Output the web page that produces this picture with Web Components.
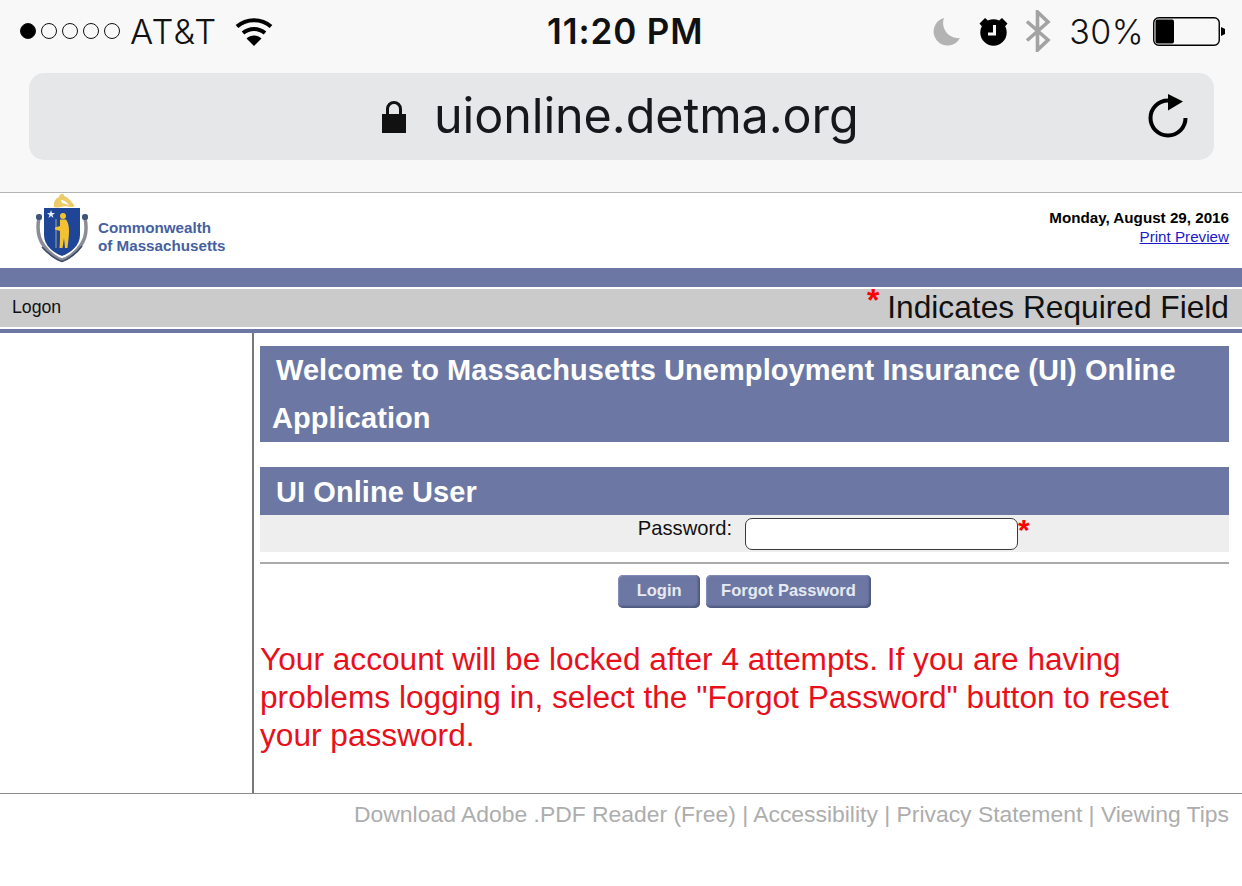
<!DOCTYPE html>
<html lang="en">
<head>
<meta charset="utf-8">
<title>UI Online</title>
<style>
  html, body { margin: 0; padding: 0; background: #fff; }
  body { width: 1242px; height: 886px; overflow: hidden; font-family: "Liberation Sans", Arial, sans-serif; }
</style>
</head>
<body>
<browser-chrome></browser-chrome>
<site-header></site-header>
<nav-strip></nav-strip>
<page-body>
  <section-title>Welcome to Massachusetts Unemployment Insurance (UI) Online Application</section-title>
  <section-title class="user">UI Online User</section-title>
  <password-row></password-row>
  <login-actions></login-actions>
  <lock-warning>Your account will be locked after 4 attempts. If you are having problems logging in, select the "Forgot Password" button to reset your password.</lock-warning>
</page-body>
<site-footer></site-footer>

<script>
class BrowserChrome extends HTMLElement {
  constructor() {
    super()
    this.attachShadow({ mode: 'open' })
    this.shadowRoot.innerHTML = `
      <style>
        :host { display: block; height: 192px; background: #f8f8f8; border-bottom: 1px solid #b4b4b4; font-family: Inter, "Open Sans", sans-serif; color: #111; }
        .status { display: grid; grid-template-columns: 547px auto 1fr; align-items: center; height: 62px; }
        .left, .right { display: flex; align-items: center; }
        .left { padding-left: 20px; }
        .right { justify-content: flex-end; padding-right: 16px; }
        .dots { display: flex; gap: 5px; margin-right: 10px; }
        .dots i { width: 16px; height: 16px; border: 1px solid #111; border-radius: 50%; box-sizing: border-box; }
        .dots i:first-child { background: #000; }
        .carrier, .pct { font-size: 34.5px; font-weight: 300; letter-spacing: 1.2px; }
        .pct { font-size: 34px; letter-spacing: 0.4px; }
        .clock { font-size: 35px; font-weight: 600; letter-spacing: 0.9px; }
        .wifi { margin-left: 18px; }
        .moon { margin-right: 18px; }
        .alarm { margin-right: 17px; }
        .bt { margin-right: 18px; }
        .pct { margin-right: 9px; }
        .url { margin: 11px 28px 0 29px; height: 87px; border-radius: 15px; background: #e6e7e9; display: flex; align-items: center; padding-left: 352px; padding-right: 25px; }
        .host { font-size: 48.5px; font-weight: 400; margin-left: 27px; flex: 1; color: #16181c; padding-bottom: 2px; letter-spacing: -0.1px; }
      </style>
      <div class="status">
        <div class="left">
          <div class="dots"><i></i><i></i><i></i><i></i><i></i></div>
          <span class="carrier">AT&amp;T</span>
          <svg class="wifi" width="38" height="30" viewBox="0 0 38 30">
            <path d="M2 10.5C11.5 2 26.5 2 36 10.5" fill="none" stroke="#000" stroke-width="4"/>
            <path d="M8 17C14.5 11.5 23.5 11.5 30 17" fill="none" stroke="#000" stroke-width="4"/>
            <path d="M11.5 22.5C15.5 18.5 22.5 18.5 26.5 22.5L19 30Z" fill="#000"/>
          </svg>
        </div>
        <div class="clock">11:20 PM</div>
        <div class="right">
          <svg class="moon" width="28" height="29" viewBox="0 0 28 29"><path d="M11 1A14 14 0 1 0 27 21A15 15 0 0 1 11 1Z" fill="#b3b3b3"/></svg>
          <svg class="alarm" width="29" height="29" viewBox="0 0 29 29">
            <circle cx="14.5" cy="15.5" r="13.2" fill="#000"/>
            <path d="M0.5 6.500L6 1L9 3.500L3 9.500ZM28.500 6.500L23 1L20 3.500L26 9.500Z" fill="#000"/>
            <path d="M15.500 8V17H9" fill="none" stroke="#f8f8f8" stroke-width="3"/>
          </svg>
          <svg class="bt" width="26" height="42" viewBox="0 0 26 42"><path d="M2 11.5L23 30L12.5 40V2L23 12L2 30.5" fill="none" stroke="#a3a3a3" stroke-width="3.6"/></svg>
          <span class="pct">30%</span>
          <svg width="73" height="29" viewBox="0 0 73 29">
            <rect x="0.75" y="0.75" width="65.5" height="27.5" rx="5" fill="none" stroke="#000" stroke-width="1.4"/>
            <rect x="2.5" y="2.5" width="18.5" height="24" rx="2" fill="#000"/>
            <path d="M68 10L72 12V17L68 19Z" fill="#000"/>
          </svg>
        </div>
      </div>
      <div class="url">
        <svg width="26" height="36" viewBox="0 0 26 36">
          <path d="M6.5 17V10A6.5 6.5 0 0 1 19.5 10V17" fill="none" stroke="#111" stroke-width="3"/>
          <rect x="1" y="15" width="24" height="19" fill="#111"/>
        </svg>
        <span class="host">uionline.detma.org</span>
        <svg width="42" height="46" viewBox="0 0 42 46">
          <path d="M38.5 24A17.5 17.5 0 1 1 21 6.500" fill="none" stroke="#000" stroke-width="4"/>
          <path d="M21 0L36 7.500L21 16.500Z" fill="#000"/>
        </svg>
      </div>
    `
  }
}

class SiteHeader extends HTMLElement {
  constructor() {
    super()
    this.attachShadow({ mode: 'open' })
    this.shadowRoot.innerHTML = `
      <style>
        :host { display: flex; height: 75px; background: #fff; padding: 0 13px 0 35px; justify-content: space-between; box-sizing: border-box; }
        .brand { display: flex; align-items: flex-start; }
        .words { font-size: 15.2px; line-height: 18px; font-weight: 700; color: #46609f; margin: 26px 0 0 9px; }
        .meta { text-align: right; font-size: 15.2px; line-height: 19px; padding-top: 15px; color: #000; }
        .meta b { display: block; }
        a { color: #1a1ac8; }
      </style>
      <div class="brand">
        <svg width="54" height="70" viewBox="0 0 54 70">
          <path d="M19 14C18 9 21 5 24 4C25 0 29 0 29 3C33 4 36 8 39 12C40 15 35 14 33 13.500C28 12 22 16 19 14Z" fill="#eccb68"/>
          <path d="M26 7C29 7 32 9 34 12L27 10Z" fill="#fff"/>
          <path d="M4 25C2 35 3 45 9 53C14 60 22 66 27 67C32 66 41 60 46 52C51 45 52 35 50 25" fill="none" stroke="#8a8c96" stroke-width="3.500"/>
          <path d="M7 54C13 61 22 67 27 68.500C32 67 41 61 47 53" fill="none" stroke="#3f4c68" stroke-width="1.500"/>
          <rect x="1" y="21" width="6" height="6" rx="2.500" fill="#3f5478"/>
          <rect x="47" y="21" width="6" height="6" rx="2.500" fill="#3f5478"/>
          <path d="M9 15H45V42C45 53 35 60 27 63C19 60 9 53 9 42Z" fill="#1f4596"/>
          <path d="M16 17L17 20L20 20L17.500 22L18.500 25L16 23L13.500 25L14.500 22L12 20L15 20Z" fill="#e8eef8"/>
          <path d="M21 26V55" stroke="#a9a98a" stroke-width="1"/>
          <circle cx="28" cy="23" r="3" fill="#f2c230"/>
          <path d="M25 26.500H31C33 29 34 33 34 38C34 44 33 50 32.500 55H30L29 45L27.500 55H24.500C25 50 25 44 25 38L20 36.500V34.500L25 33Z" fill="#f2c230"/>
        </svg>
        <div class="words">Commonwealth<br>of Massachusetts</div>
      </div>
      <div class="meta"><b>Monday, August 29, 2016</b><a href="#">Print Preview</a></div>
    `
  }
}

class NavStrip extends HTMLElement {
  constructor() {
    super()
    this.attachShadow({ mode: 'open' })
    this.shadowRoot.innerHTML = `
      <style>
        :host { display: block; }
        .band { height: 19px; background: #6c78a3; }
        .bar { height: 38px; margin-top: 2px; background: #cbcbcb; display: flex; justify-content: space-between; align-items: center; padding: 0 13px 0 12px; color: #111; }
        .crumb { font-size: 17.7px; position: relative; top: -1px; }
        .req { font-size: 31.7px; line-height: 36px; height: 38px; white-space: nowrap; }
        .req span { color: #f00; font-weight: 700; position: relative; top: -7px; margin-right: 8px; }
        .rule { height: 4px; margin-top: 2px; background: #6c78a3; }
      </style>
      <div class="band"></div>
      <div class="bar">
        <span class="crumb">Logon</span>
        <span class="req"><span>*</span>Indicates Required Field</span>
      </div>
      <div class="rule"></div>
    `
  }
}

class PageBody extends HTMLElement {
  constructor() {
    super()
    this.attachShadow({ mode: 'open' })
    this.shadowRoot.innerHTML = `
      <style>
        :host { display: grid; grid-template-columns: 254px 1fr; height: 460px; }
        .side { border-right: 2px solid #77777f; }
        .main { padding: 13px 13px 0 6px; min-width: 0; }
      </style>
      <div class="side"></div>
      <div class="main"><slot></slot></div>
    `
  }
}

class SectionTitle extends HTMLElement {
  constructor() {
    super()
    this.attachShadow({ mode: 'open' })
    this.shadowRoot.innerHTML = `
      <style>
        :host { display: block; background: #6c78a3; color: #fff; font-size: 29px; font-weight: 700; line-height: 48px; padding-left: 12px; text-indent: 4px; letter-spacing: 0.07px; }
        :host(.user) { margin-top: 25px; height: 48px; line-height: 50px; }
      </style>
      <slot></slot>
    `
  }
}

class PasswordRow extends HTMLElement {
  constructor() {
    super()
    this.attachShadow({ mode: 'open' })
    this.shadowRoot.innerHTML = `
      <style>
        :host { display: grid; grid-template-columns: 472px 286px auto; height: 37px; background: #eee; }
        label { font-size: 20.2px; text-align: right; padding-top: 1px; color: #111; line-height: 24px; }
        .field { margin: 3px 0 0 13px; width: 273px; height: 32px; box-sizing: border-box; background: #fff; border: 1.500px solid #3a3a3a; border-radius: 7px; }
        .mark { color: #f00; font-size: 30px; font-weight: 700; line-height: 30px; }
      </style>
      <label>Password:</label>
      <div class="field"></div>
      <span class="mark">*</span>
    `
  }
}

class LoginActions extends HTMLElement {
  constructor() {
    super()
    this.attachShadow({ mode: 'open' })
    this.shadowRoot.innerHTML = `
      <style>
        :host { display: flex; gap: 6px; justify-content: center; border-top: 2px solid #aaa; margin-top: 10px; padding: 11px 0 0 0; }
        span { display: block; height: 33px; line-height: 31px; box-sizing: border-box; padding: 0 15px; border-radius: 5px; background: #6c78a3; color: #e6e9f2; font-size: 16.5px; font-weight: 700; box-shadow: inset -2px -2px 2px #4f5a80, inset 1px 1px 1px #8490b8; }
        .login { width: 82px; text-align: center; padding: 0; }
      </style>
      <span class="login">Login</span>
      <span>Forgot Password</span>
    `
  }
}

class LockWarning extends HTMLElement {
  constructor() {
    super()
    this.attachShadow({ mode: 'open' })
    this.shadowRoot.innerHTML = `
      <style>
        :host { display: block; margin-top: 32px; color: #e8101a; font-size: 31.65px; line-height: 38px; }
      </style>
      <slot></slot>
    `
  }
}

class SiteFooter extends HTMLElement {
  constructor() {
    super()
    this.attachShadow({ mode: 'open' })
    this.shadowRoot.innerHTML = `
      <style>
        :host { display: block; border-top: 1px solid #8c8c8c; padding: 5px 13px 0 0; text-align: right; color: #adadad; font-size: 22.9px; line-height: 30px; }
      </style>
      Download Adobe .PDF Reader (Free) | Accessibility | Privacy Statement | Viewing Tips
    `
  }
}

customElements.define('browser-chrome', BrowserChrome)
customElements.define('site-header', SiteHeader)
customElements.define('nav-strip', NavStrip)
customElements.define('page-body', PageBody)
customElements.define('section-title', SectionTitle)
customElements.define('password-row', PasswordRow)
customElements.define('login-actions', LoginActions)
customElements.define('lock-warning', LockWarning)
customElements.define('site-footer', SiteFooter)
</script>
</body>
</html>
